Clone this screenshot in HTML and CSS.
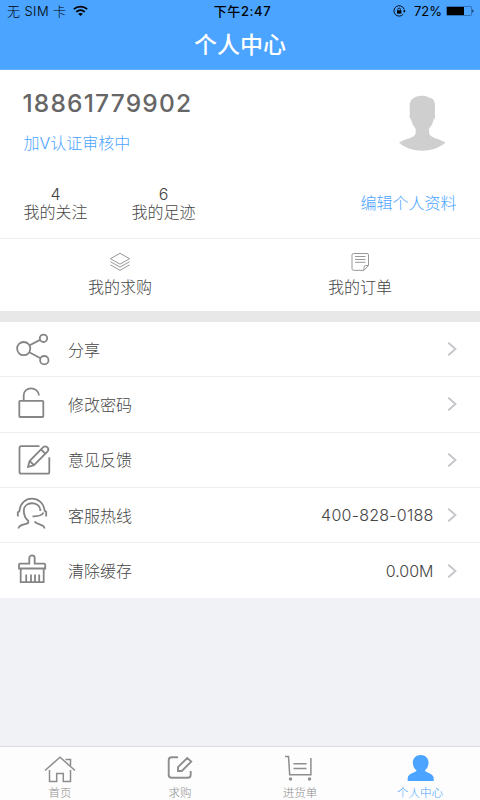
FILE: index.html
```html
<!DOCTYPE html>
<html lang="zh-CN">

<head>
    <meta charset="UTF-8">
    <meta name="viewport" content="width=device-width, initial-scale=1.0">
    <title>个人中心</title>
    <link rel="stylesheet" href="styles.css">
</head>

<body>
    <header class="top">
        <div class="status">
            <div class="status-left">
                <span>无 SIM 卡</span>
                <svg class="wifi" width="15" height="12" viewBox="0 0 15 12" fill="none" stroke="#000" stroke-width="1.7">
                    <path d="M.8 4.2C4.600.7 10.400.7 14.200 4.200M3.200 6.900c2.600-2.200 6-2.200 8.600 0" />
                    <path d="M7.500 11L5.100 8.800c1.400-1.200 3.400-1.200 4.800 0z" fill="#000" stroke="none" />
                </svg>
            </div>
            <div class="status-time">下午2:47</div>
            <div class="status-right">
                <svg width="13" height="12" viewBox="0 0 13 12" fill="none" stroke="#000">
                    <path d="M11 4A5.200 5.200 0 1 0 10.200 9.200M11.300 4.500v2.500" stroke-width=".9" />
                    <path d="M10 5.800h2.600L11.300 7.700z" fill="#000" stroke="none" />
                    <rect x="4" y="5.300" width="4.400" height="3.300" fill="#000" stroke="none" />
                    <path d="M4.900 5.500V4.400a1.300 1.300 0 0 1 2.600 0v1.100" stroke-width=".8" />
                </svg>
                <span class="percent">72%</span>
                <svg width="28" height="10" viewBox="0 0 28 10">
                    <rect x=".4" y=".4" width="25.200" height="9.200" rx="1.200" fill="none" stroke="#1d4a78" stroke-width=".6" />
                    <rect x="1" y="1" width="17" height="8" fill="#000" />
                    <path d="M26.500 3.500c1.200.3 1.200 2.700 0 3z" fill="#000" />
                </svg>
            </div>
        </div>
        <h1 class="title">个人中心</h1>
    </header>

    <section class="profile">
        <div class="user">
            <div>
                <div class="phone">18861779902</div>
                <div class="verify">加V认证审核中</div>
            </div>
            <svg class="avatar" width="48" height="58" viewBox="0 0 48 58" fill="#cfcfcf">
                <path d="M24 1.800c3 0 5 .5 6.500 1.600 4.500.2 6.500 3.200 6.500 8.600l-.2 8.500c.9.600.4 4.400-1.200 5.100-.7 3.500-2.300 6.500-4.500 9V39.500c1.500 4.500 9.500 5 16.400 9-12 11-35 11-46.500 0C8 44.500 16.500 44 17.600 39.500v-5c-2.200-2.500-3.800-5.500-4.500-9-1.600-.7-2.100-4.500-1.200-5.100l-.3-8.400C11.600 5.500 16.500 1.800 24 1.800z" />
            </svg>
        </div>
        <div class="stats">
            <div class="stat"><span>4</span><span>我的关注</span></div>
            <div class="stat"><span>6</span><span>我的足迹</span></div>
            <div class="edit">编辑个人资料</div>
        </div>
    </section>

    <section class="shortcuts">
        <div class="shortcut">
            <svg width="22" height="20" viewBox="0 0 22 20" fill="none" stroke="#999" stroke-width="1">
                <path d="M11 1.300l9.600 5.400L11 12.100 1.400 6.700z" />
                <path d="M1.400 9.700L11 15.100l9.600-5.400M1.400 12.900L11 18.300l9.600-5.400" />
            </svg>
            <span>我的求购</span>
        </div>
        <div class="shortcut">
            <svg width="22" height="20" viewBox="0 0 22 20" fill="none" stroke="#999" stroke-width="1">
                <path d="M4.500 1.500h13.500q1.500 0 1.500 1.500v10.500l-4.500 4.800H4.500Q3 18.300 3 16.800V3q0-1.500 1.500-1.500z" />
                <path d="M15 18.300v-3q0-1.800 1.800-1.800h2.700M6 4.500h10.500M6 7.500h10.500M6 10.300h10.500" />
            </svg>
            <span>我的订单</span>
        </div>
    </section>

    <section class="menu">
        <div class="row">
            <svg class="icon" viewBox="0 0 40 36">
                <circle cx="11.700" cy="17.600" r="6.600" />
                <circle cx="31.500" cy="7.300" r="3.700" />
                <circle cx="32.300" cy="29.200" r="4.200" />
                <path d="M17.600 14.300l10.500-5.400M17.300 21.300l11.200 6" />
            </svg>
            <span class="name">分享</span>
            <svg class="arrow" viewBox="0 0 10 16"><path d="M1.300 1.800L8.500 8l-7.200 6.200" /></svg>
        </div>
        <div class="row">
            <svg class="icon" viewBox="0 0 40 36">
                <rect x="7.300" y="14.800" width="24" height="16.200" rx=".8" />
                <path d="M11.700 14.800V9.500c0-9.500 14.500-9.500 15.300 0" />
            </svg>
            <span class="name">修改密码</span>
            <svg class="arrow" viewBox="0 0 10 16"><path d="M1.300 1.800L8.500 8l-7.200 6.200" /></svg>
        </div>
        <div class="row">
            <svg class="icon" viewBox="0 0 40 36">
                <path d="M27.500 4.200H9.200q-1.700 0-1.700 1.700v24q0 1.700 1.700 1.700h26.400q1.700 0 1.700-1.700V15.200" />
                <path d="M16 25l1.600-6L31.200 5.200q2-1.700 4 0 2.200 2 .4 4.200L22 23.200zM17.600 19l4.400 4.200M29 7.500l4.400 4.200" />
            </svg>
            <span class="name">意见反馈</span>
            <svg class="arrow" viewBox="0 0 10 16"><path d="M1.300 1.800L8.500 8l-7.200 6.200" /></svg>
        </div>
        <div class="row">
            <svg class="icon" viewBox="0 0 40 36">
                <path d="M5.800 19.500v-4l1.700-1.500C8.500-2.300 31-2.300 32.500 13.500l1.700 1.500v4.500" />
                <path d="M31.500 15.500c-1.500 3.500-5.500 4-11 3.800" />
                <path d="M28.300 14v-1.500c-1-8.500-16.300-8.500-16.500 1 0 5 1.600 8 4.500 10.500v1.700C13.500 28 6.500 27 6.500 31.500M22.500 24.500c2.500 3.700 10 2.500 10 7" />
            </svg>
            <span class="name">客服热线</span>
            <span class="value hotline">400-828-0188</span>
            <svg class="arrow" viewBox="0 0 10 16"><path d="M1.300 1.800L8.500 8l-7.200 6.200" /></svg>
        </div>
        <div class="row">
            <svg class="icon" viewBox="0 0 40 36">
                <path d="M17.300 10.700V5c0-3.400 5.400-3.400 5.400 0v5.700h9.500q1 0 1 1v3.800H7v-3.800q0-1 1-1z" />
                <path d="M8.700 15.500v13.600h23V15.500M14.200 28.500v-7M19 28.500v-7M23 28.500v-7M27.200 28.500v-7" />
            </svg>
            <span class="name">清除缓存</span>
            <span class="value">0.00M</span>
            <svg class="arrow" viewBox="0 0 10 16"><path d="M1.300 1.800L8.500 8l-7.200 6.200" /></svg>
        </div>
    </section>

    <nav class="tabs">
        <div class="tab">
            <svg viewBox="0 0 34 30">
                <path d="M2 16.500L17 3.200l15 13.300M6.500 16v11.500h7.200v-8h6.600v8h7.200V16M22.500 5.500h5v6" />
            </svg>
            <span>首页</span>
        </div>
        <div class="tab">
            <svg viewBox="0 0 34 30" class="bold">
                <path d="M15 3.200H8.700Q5.700 3.200 5.700 6.200v14.500q0 3 3 3h16q3 0 3-3V17" />
                <path d="M15 17v-3.800L24.200 4l4 3.600L18.800 17z" />
            </svg>
            <span>求购</span>
        </div>
        <div class="tab">
            <svg viewBox="0 0 34 30">
                <path d="M2 2.500h3.500L6.700 20.700h21.200V4M10.500 9.800h13M10.500 14.500h13" />
                <circle cx="7.500" cy="25" r="1" />
                <circle cx="26.500" cy="25" r="1" />
            </svg>
            <span>进货单</span>
        </div>
        <div class="tab active">
            <svg viewBox="0 0 34 30">
                <path d="M17.700 1c4.700 0 7.900 3.300 7.900 7.800 0 3.300-1.600 6-3.700 7.500 0 2.700 8.800 2.500 8.800 8.200v2.500h-26v-2.500c0-5.700 8.800-5.500 8.800-8.200-2.100-1.500-3.700-4.200-3.700-7.500 0-4.500 3.200-7.800 7.900-7.800z" />
            </svg>
            <span>个人中心</span>
        </div>
    </nav>
</body>

</html>
```

FILE: styles.css
```css
* {
    box-sizing: border-box;
}

body {
    margin: 0;
    height: 800px;
    display: flex;
    flex-direction: column;
    background-color: #f0f2f5;
    color: #444;
    font-family: Inter, "Noto Sans CJK SC", sans-serif;
    font-size: 16px;
    font-weight: 300;
    overflow: hidden;
}

svg {
    display: block;
    flex: none;
}

.top {
    height: 70px;
    background-color: #4ba4ff;
    border-bottom: 1px solid #69aff5;
}

.status {
    display: grid;
    grid-template-columns: 1fr auto 1fr;
    align-items: center;
    height: 22px;
    padding: 0 6px 0 7px;
    color: #000;
    font-size: 13px;
    line-height: 22px;
}

.status-left,
.status-right {
    display: flex;
    align-items: center;
}

.status-left {
    gap: 7px;
    letter-spacing: 0.4px;
}

.status-right {
    justify-content: flex-end;
}

.status-time {
    padding-left: 4px;
    font-weight: 500;
    letter-spacing: 0.6px;
}

.percent {
    margin: 0 4px 0 8px;
    font-weight: 400;
}

.title {
    margin: 0;
    color: #fff;
    font-size: 23px;
    font-weight: 500;
    line-height: 46px;
    text-align: center;
}

.profile {
    height: 169px;
    padding: 0 23.5px;
    background-color: #fff;
    border-bottom: 1px solid #f0f0f0;
}

.user {
    display: flex;
    justify-content: space-between;
    height: 115px;
    padding: 17px 11px 0 0;
}

.phone {
    color: #666;
    font-size: 24.5px;
    font-weight: 500;
    letter-spacing: 1.2px;
    line-height: 32px;
    margin-left: -1px;
}

.verify {
    margin-top: 12px;
    color: #4ba4ff;
    line-height: 24px;
}

.avatar {
    margin-top: 7px;
}

.stats {
    display: flex;
}

.stat {
    display: flex;
    flex-direction: column;
    align-items: center;
    margin-right: 44px;
    line-height: 18px;
}

.edit {
    margin-left: auto;
    color: #4ba4ff;
    line-height: 37px;
}

.shortcuts {
    display: flex;
    height: 72px;
    background-color: #fff;
}

.shortcut {
    flex: 1;
    display: flex;
    flex-direction: column;
    align-items: center;
    gap: 3px;
    padding-top: 13px;
    line-height: 24px;
}

.menu {
    border-top: 11px solid #e8e8e8;
    background-color: #fff;
}

.row {
    display: flex;
    align-items: center;
    height: 55.3px;
    padding: 0 23px 0 12px;
    border-bottom: 1px solid #eee;
}

.row:last-child {
    border-bottom: none;
}

.icon {
    width: 40px;
    height: 36px;
    margin-right: 16px;
    fill: none;
    stroke: #858585;
    stroke-width: 1.8;
}

.name {
    flex: 1;
    padding-bottom: 1px;
}

.value {
    margin-right: 13.5px;
}

.hotline {
    letter-spacing: 0.25px;
}

.arrow {
    width: 10px;
    height: 16px;
    fill: none;
    stroke: #c4c4c9;
    stroke-width: 1.8;
}

.tabs {
    display: flex;
    height: 54px;
    margin-top: auto;
    background-color: #fdfdfd;
    border-top: 1px solid #dcdcdc;
}

.tab {
    flex: 1;
    display: flex;
    flex-direction: column;
    align-items: center;
    padding-top: 7px;
    color: #8e8e8e;
    font-size: 11.5px;
    line-height: 18px;
}

.tab svg {
    width: 34px;
    height: 30px;
    fill: none;
    stroke: #8e8e8e;
    stroke-width: 1.5;
}

.tab svg.bold {
    stroke-width: 1.9;
}

.tab.active {
    color: #4ba4ff;
}

.tab.active svg {
    fill: #4ba4ff;
    stroke: none;
}
```
